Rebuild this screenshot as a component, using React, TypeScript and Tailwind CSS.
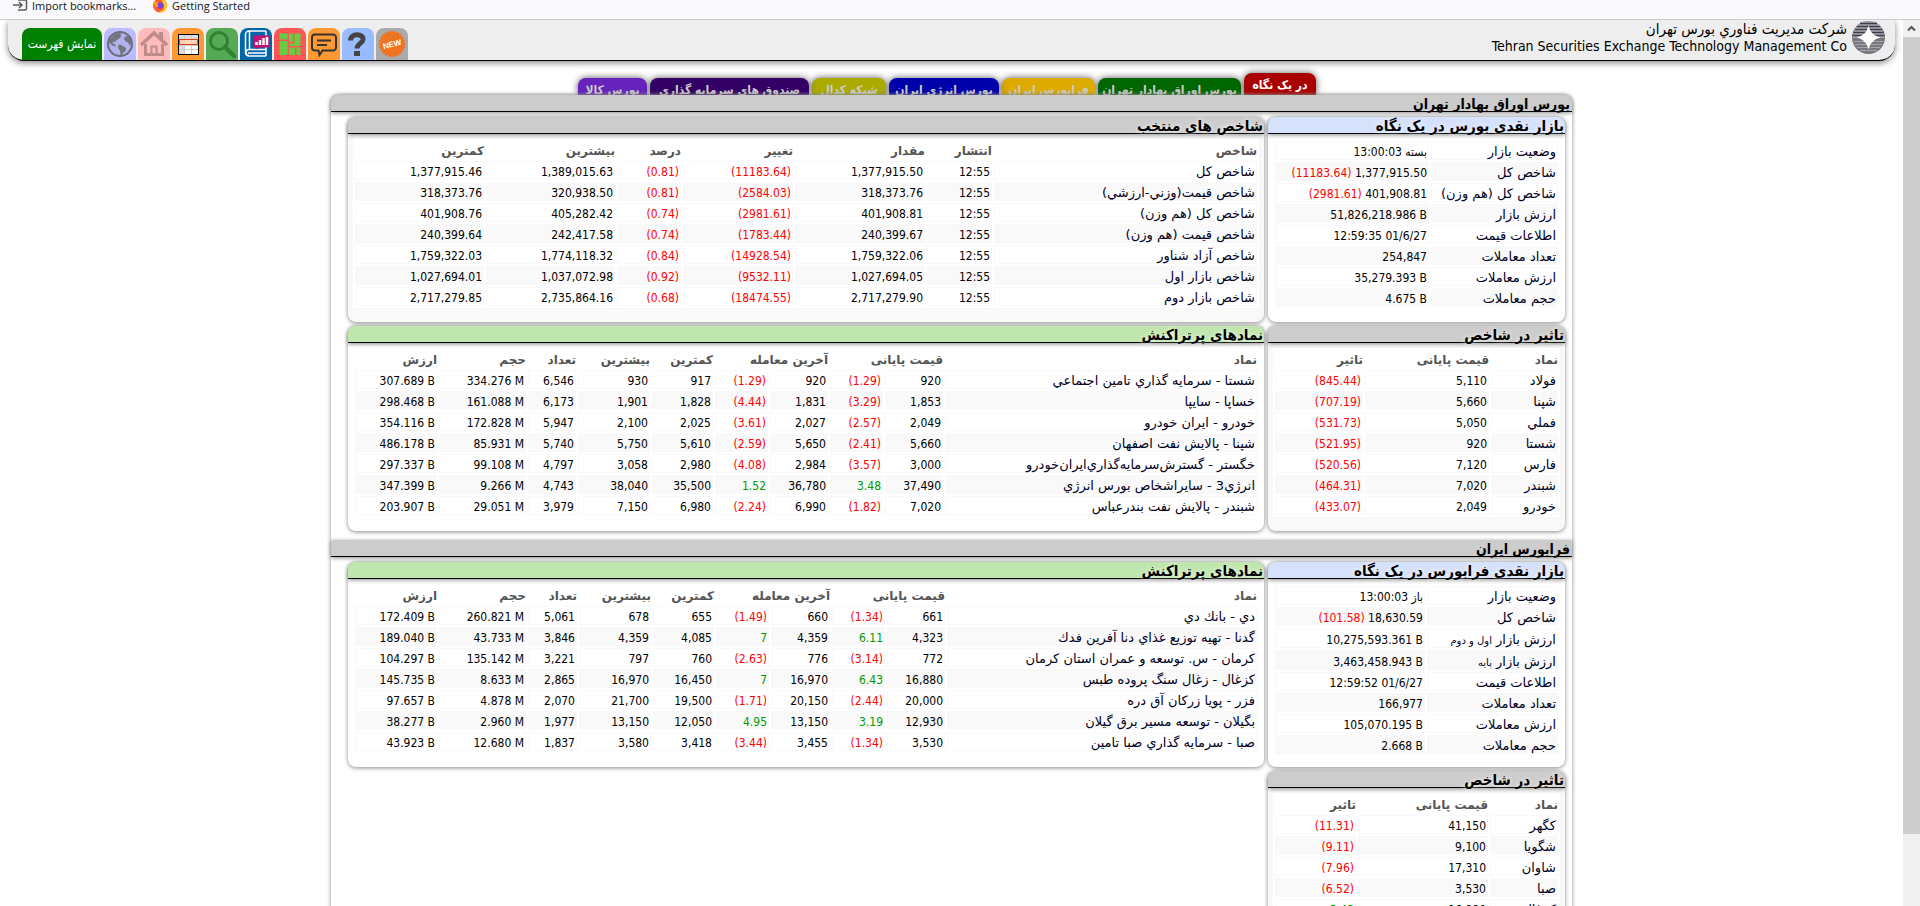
import { ReactNode } from "react";
import clsx from "clsx";

type Row = string[];

const tabs = [
  { label: "در یک نگاه", color: "bg-[#a00]", width: "w-[72px]", active: true },
  { label: "بورس اوراق بهادار تهران", color: "bg-[#060]", width: "w-[143px]" },
  { label: "فرابورس ایران", color: "bg-[#da0]", width: "w-[93px]" },
  { label: "بورس انرژی ایران", color: "bg-[#00a]", width: "w-[110px]" },
  { label: "شبکه کدال", color: "bg-[#aa0]", width: "w-[74px]" },
  { label: "صندوق های سرمایه گذاری", color: "bg-[#306]", width: "w-[159px]" },
  { label: "بورس کالا", color: "bg-[#62b]", width: "w-[69px]" },
];

const indices: Row[] = [
  ["شاخص کل", "12:55", "1,377,915.50", "(11183.64)", "(0.81)", "1,389,015.63", "1,377,915.46"],
  ["شاخص قيمت(وزني-ارزشي)", "12:55", "318,373.76", "(2584.03)", "(0.81)", "320,938.50", "318,373.76"],
  ["شاخص کل (هم وزن)", "12:55", "401,908.81", "(2981.61)", "(0.74)", "405,282.42", "401,908.76"],
  ["شاخص قيمت (هم وزن)", "12:55", "240,399.67", "(1783.44)", "(0.74)", "242,417.58", "240,399.64"],
  ["شاخص آزاد شناور", "12:55", "1,759,322.06", "(14928.54)", "(0.84)", "1,774,118.32", "1,759,322.03"],
  ["شاخص بازار اول", "12:55", "1,027,694.05", "(9532.11)", "(0.92)", "1,037,072.98", "1,027,694.01"],
  ["شاخص بازار دوم", "12:55", "2,717,279.90", "(18474.55)", "(0.68)", "2,735,864.16", "2,717,279.85"],
];

const bourseActive: Row[] = [
  ["شستا - سرمايه گذاري تامين اجتماعي", "920", "(1.29)", "920", "(1.29)", "917", "930", "6,546", "334.276 M", "307.689 B"],
  ["خساپا - سايپا", "1,853", "(3.29)", "1,831", "(4.44)", "1,828", "1,901", "6,173", "161.088 M", "298.468 B"],
  ["خودرو - ايران خودرو", "2,049", "(2.57)", "2,027", "(3.61)", "2,025", "2,100", "5,947", "172.828 M", "354.116 B"],
  ["شپنا - پالايش نفت اصفهان", "5,660", "(2.41)", "5,650", "(2.59)", "5,610", "5,750", "5,740", "85.931 M", "486.178 B"],
  ["خگستر - گسترش‌سرمايه‌گذاري‌ايران‌خودرو", "3,000", "(3.57)", "2,984", "(4.08)", "2,980", "3,058", "4,797", "99.108 M", "297.337 B"],
  ["انرژي3 - سايراشخاص بورس انرژي", "37,490", "3.48", "36,780", "1.52", "35,500", "38,040", "4,743", "9.266 M", "347.399 B"],
  ["شبندر - پالايش نفت بندرعباس", "7,020", "(1.82)", "6,990", "(2.24)", "6,980", "7,150", "3,979", "29.051 M", "203.907 B"],
];

const faraActive: Row[] = [
  ["دي - بانك دي", "661", "(1.34)", "660", "(1.49)", "655", "678", "5,061", "260.821 M", "172.409 B"],
  ["گدنا - تهيه توزيع غذاي دنا آفرين فدك", "4,323", "6.11", "4,359", "7", "4,085", "4,359", "3,846", "43.733 M", "189.040 B"],
  ["كرمان - س. توسعه و عمران استان كرمان", "772", "(3.14)", "776", "(2.63)", "760", "797", "3,221", "135.142 M", "104.297 B"],
  ["كزغال - زغال سنگ پروده طبس", "16,880", "6.43", "16,970", "7", "16,450", "16,970", "2,865", "8.633 M", "145.735 B"],
  ["فزر - پويا زركان آق دره", "20,000", "(2.44)", "20,150", "(1.71)", "19,500", "21,700", "2,070", "4.878 M", "97.657 B"],
  ["بگيلان - توسعه مسير برق گيلان", "12,930", "3.19", "13,150", "4.95", "12,050", "13,150", "1,977", "2.960 M", "38.277 B"],
  ["صبا - سرمايه گذاري صبا تامين", "3,530", "(1.34)", "3,455", "(3.44)", "3,418", "3,580", "1,837", "12.680 M", "43.923 B"],
];

const bourseEffect: Row[] = [
  ["فولاد", "5,110", "(845.44)"],
  ["شپنا", "5,660", "(707.19)"],
  ["فملي", "5,050", "(531.73)"],
  ["شستا", "920", "(521.95)"],
  ["فارس", "7,120", "(520.56)"],
  ["شبندر", "7,020", "(464.31)"],
  ["خودرو", "2,049", "(433.07)"],
];

const faraEffect: Row[] = [
  ["كگهر", "41,150", "(11.31)"],
  ["شگويا", "9,100", "(9.11)"],
  ["شاوان", "17,310", "(7.96)"],
  ["صبا", "3,530", "(6.52)"],
  ["كزغال", "16,880", "3.43"],
];

const activeHead = [
  { label: "نماد" },
  { label: "قیمت پایانی", span: 2 },
  { label: "آخرین معامله", span: 2 },
  { label: "کمترین" },
  { label: "بیشترین" },
  { label: "تعداد" },
  { label: "حجم" },
  { label: "ارزش" },
];

const effectHead = [{ label: "نماد" }, { label: "قیمت پایانی" }, { label: "تاثیر" }];

const indexHead = ["شاخص", "انتشار", "مقدار", "تغییر", "درصد", "بیشترین", "کمترین"].map((label) => ({ label }));

const cell = "whitespace-nowrap border border-[#f9f9f9] px-px pb-0 pt-[3px] text-right leading-[14px]";
const nameText = "font-['DejaVu_Sans',sans-serif] text-[13px] text-[#002]";

function DataTable({ head, cols, rows, change }: {
  head: { label: string; span?: number }[];
  cols: string[];
  rows: Row[];
  change: number[];
}) {
  return (
    <table className="w-full table-fixed border-separate border-spacing-[2px] bg-white text-xs">
      <colgroup>
        {cols.map((c, i) => <col key={i} className={c} />)}
      </colgroup>
      <thead>
        <tr>
          {head.map((h) => (
            <th key={h.label} colSpan={h.span} className="h-[18px] whitespace-nowrap px-0 pb-0 pt-0.5 text-right font-['DejaVu_Sans',sans-serif] font-bold leading-4 text-[#555]">
              {h.label}
            </th>
          ))}
        </tr>
      </thead>
      <tbody>
        {rows.map((row) => (
          <tr key={row[0]} className="even:bg-[#f9f9f9]">
            {row.map((value, i) => (
              <td
                key={i}
                dir={i === 0 ? "rtl" : "ltr"}
                className={clsx(
                  cell,
                  "h-[19px]",
                  i === 0 && nameText,
                  change.includes(i) && (value.startsWith("(") ? "text-[#f00]" : "text-[#090]")
                )}
              >
                {value}
              </td>
            ))}
          </tr>
        ))}
      </tbody>
    </table>
  );
}

function SummaryTable({ labelCol, rows }: { labelCol: string; rows: [ReactNode, ReactNode][] }) {
  return (
    <table className="w-full table-fixed border-separate border-spacing-[2px] bg-white text-xs">
      <colgroup>
        <col className={labelCol} />
        <col />
      </colgroup>
      <tbody>
        {rows.map(([label, value], i) => (
          <tr key={i} className="even:bg-[#f9f9f9]">
            <th className={clsx(cell, nameText, "font-normal", typeof label === "string" ? "h-[19px]" : "h-5")}>{label}</th>
            <td className={cell}>{value}</td>
          </tr>
        ))}
      </tbody>
    </table>
  );
}

function Panel({ title, tone, muted, children }: { title: string; tone: string; muted?: boolean; children: ReactNode }) {
  return (
    <section className={clsx("min-h-[205px] rounded-lg shadow-[0_1px_4px_#888]", muted ? "bg-[#f9f9f9]" : "bg-white")}>
      <h3 className={clsx("h-[17px] rounded-t-lg border-b border-black px-px text-[15px] font-bold leading-[18px] shadow-[0_1px_4px_#888] [text-shadow:0_0_5px_#fff]", tone)}>
        {title}
      </h3>
      <div className="px-[5px] pb-2 pt-[5px]">{children}</div>
    </section>
  );
}

function Market({ title, first, side, main }: { title: string; first?: boolean; side: ReactNode; main: ReactNode }) {
  return (
    <section className="mb-[9px]">
      <h2 className={clsx("h-[17px] border-b border-black bg-[#ccc] px-0.5 text-sm font-bold leading-[18px] shadow-[0_1px_4px_#888]", first && "rounded-t-lg")}>
        {title}
      </h2>
      <div className="flex gap-1 pl-[17px] pr-[7px] pt-[5px]">
        <div className="flex w-[297px] shrink-0 flex-col gap-1">{side}</div>
        <div className="flex min-w-0 grow flex-col gap-1">{main}</div>
      </div>
    </section>
  );
}

const Red = ({ children }: { children: string }) => <bdi className="text-[#f00]">{children}</bdi>;
const Ltr = ({ children }: { children: string }) => <bdi dir="ltr">{children}</bdi>;

const bourseSummary: [ReactNode, ReactNode][] = [
  ["وضعیت بازار", "بسته 13:00:03"],
  ["شاخص کل", <><Ltr>1,377,915.50</Ltr> <Red>(11183.64)</Red></>],
  ["شاخص كل (هم وزن)", <><Ltr>401,908.81</Ltr> <Red>(2981.61)</Red></>],
  ["ارزش بازار", <Ltr>51,826,218.986 B</Ltr>],
  ["اطلاعات قیمت", <Ltr>12:59:35 01/6/27</Ltr>],
  ["تعداد معاملات", "254,847"],
  ["ارزش معاملات", <Ltr>35,279.393 B</Ltr>],
  ["حجم معاملات", <Ltr>4.675 B</Ltr>],
];

const faraSummary: [ReactNode, ReactNode][] = [
  ["وضعیت بازار", "باز 13:00:03"],
  ["شاخص کل", <><Ltr>18,630.59</Ltr> <Red>(101.58)</Red></>],
  [<>ارزش بازار <small className="text-[10px] leading-3">اول و دوم</small></>, <Ltr>10,275,593.361 B</Ltr>],
  [<>ارزش بازار <small className="text-[10px] leading-3">پایه</small></>, <Ltr>3,463,458.943 B</Ltr>],
  ["اطلاعات قیمت", <Ltr>12:59:52 01/6/27</Ltr>],
  ["تعداد معاملات", "166,977"],
  ["ارزش معاملات", <Ltr>105,070.195 B</Ltr>],
  ["حجم معاملات", <Ltr>2.668 B</Ltr>],
];

const GlobeIcon = () => (
  <svg viewBox="0 0 32 32" className="size-8">
    <circle cx="16" cy="16" r="12" fill="#b2b2ee" stroke="#6c6c78" strokeWidth="2" />
    <g fill="#75757f">
      <path d="M6 11.500l4-5 5-1.500 3 1-2 1.500 1.500 1-3 2.500-2.500 1.500-1 2-2-1-.500 1.500 2.500 1.500 1 2-3-.500-3-2.500-1.500-2z" />
      <path d="M14.500 16.500l3 .500 4.500 3-.500 3-2.500 2-1 2.500-1.500-.500-.500-4-2-3z" />
      <path d="M21 8.500l3.500-.500 2.500 4 .500 4-2 1.500-1.500-3-2.500-1-1.500-2.500z" />
    </g>
  </svg>
);

const HomeIcon = () => (
  <svg viewBox="0 0 32 32" className="size-8" fill="none" stroke="#bf8c8c">
    <path d="M3 17L16 5l13 12" strokeWidth="3.5" />
    <path d="M23 4v7" strokeWidth="4" />
    <path d="M7.500 16v10.500h17V16" strokeWidth="3" />
    <path d="M13.500 27v-8.500h5V27" strokeWidth="2" />
  </svg>
);

const SheetIcon = () => (
  <svg viewBox="0 0 32 32" className="size-8">
    <rect x="6.500" y="6.500" width="20" height="20" fill="#fff" stroke="#000" />
    <path d="M7 7h5v19H7zM12 7h14v4H12z" fill="#ddd" />
    <path d="M12.500 7v19M19.500 7v19M7 17.500h19M7 21.500h19" stroke="#ccc" strokeWidth="1" />
    <rect x="7.500" y="11.500" width="18" height="5" fill="#fca" fillOpacity=".8" stroke="#e0401a" />
  </svg>
);

const SearchIcon = () => (
  <svg viewBox="0 0 32 32" className="size-8" fill="none" stroke="#338033">
    <circle cx="13" cy="13" r="8.500" strokeWidth="3" />
    <path d="M19 19l9 9" strokeWidth="4.500" strokeLinecap="round" />
  </svg>
);

const BookIcon = () => (
  <svg viewBox="0 0 32 32" className="size-8">
    <path d="M26 3H9a3.500 3.500 0 0 0-3.500 3.500v18A3.500 3.500 0 0 0 9 28h17M9.500 3v19M26 3v18.500H9a3 3 0 0 0 0 6M8 25h18M26 22v6" fill="none" stroke="#fff" strokeWidth="1.500" />
    <path d="M14 7.500h15v12H19l-2 2-1-2h-2z" fill="#c8106e" />
    <path d="M16.500 17v-3M20 17v-5M23.500 17v-7M27 17V9" stroke="#fff" strokeWidth="2.500" />
  </svg>
);

const MapIcon = () => (
  <svg viewBox="0 0 32 32" className="size-8" fill="#6c4">
    <path d="M5.500 5.500h8v6h-8zM5.500 13h8v14h-8zM15 5.500h4v8.500h-4zM20.500 5.500h6v12.500H15v-2.500h5.500zM15 19.500h6v7.500h-6zM22.500 19.500h4v7.500h-4z" />
  </svg>
);

const ChatIcon = () => (
  <svg viewBox="0 0 32 32" className="size-8" fill="none" stroke="#333" strokeWidth="2">
    <path d="M7 6.500h18a3 3 0 0 1 3 3v10a3 3 0 0 1-3 3H14.500L11.500 27l-1-4.500H7a3 3 0 0 1-3-3v-10a3 3 0 0 1 3-3z" />
    <path d="M9 12.500h14M9 17h10" />
  </svg>
);

const HelpIcon = () => (
  <svg viewBox="0 0 32 32" className="size-8" fill="none" stroke="#444">
    <path d="M8.500 12.500c0-7.500 13-7.500 12.500-1-.5 4-6 4-6 9" strokeWidth="5" />
    <path d="M12 23h6v5h-6z" fill="#444" stroke="none" />
  </svg>
);

const sealPoints = Array.from({ length: 48 }, (_, i) => {
  const r = i % 2 ? 12 : 13.8;
  const a = (i * Math.PI) / 24;
  return `${16 + r * Math.cos(a)},${16 + r * Math.sin(a)}`;
}).join(" ");

const NewIcon = () => (
  <svg viewBox="0 0 32 32" className="size-8">
    <polygon points={sealPoints} fill="#ee7420" />
    <text x="16" y="19" textAnchor="middle" fontSize="8" fontWeight="bold" fill="#fff" fontFamily="Liberation Sans" transform="rotate(-14 16 16)">NEW</text>
  </svg>
);

const tools = [
  { label: "English", color: "bg-[#bbf]", icon: <GlobeIcon /> },
  { label: "صفحه اصلی", color: "bg-[#fbb]", icon: <HomeIcon /> },
  { label: "دیده بان", color: "bg-[#f93]", icon: <SheetIcon /> },
  { label: "جستجو", color: "bg-[#5a5]", icon: <SearchIcon /> },
  { label: "آمار", color: "bg-[#06a]", icon: <BookIcon /> },
  { label: "نقشه بازار", color: "bg-[#f55]", icon: <MapIcon /> },
  { label: "پیام ها", color: "bg-[#f93]", icon: <ChatIcon /> },
  { label: "راهنما", color: "bg-[#9bf]", icon: <HelpIcon /> },
  { label: "تازه ها", color: "bg-[#aaa]", icon: <NewIcon /> },
];

const Logo = () => (
  <svg viewBox="0 0 33 33" className="size-[33px] shrink-0">
    <circle cx="16.500" cy="16.500" r="16.500" fill="#77777f" />
    <path d="M8 2.500h17M5 5.500h23M3 8.500h27M1.500 11.500h30M.5 14.500h32" stroke="#3c3c4c" strokeWidth="2" />
    <path d="M9 1h15M5 4h23M3 7h27M2 10h29M1 13h31M.5 16h32" stroke="#c5c5ca" strokeWidth="1" />
    <path d="M1.500 20.500h30M3 23.500h27M5 26.500h23M8 29.500h17" stroke="#a5a5ab" strokeWidth="1" />
    <path d="M16.500 4.500C18 11 22 15 28.500 16.500 22 18 18 22 16.500 28.500 15 22 11 18 4.500 16.500 11 15 15 11 16.500 4.500z" fill="#fff" />
  </svg>
);

function BookmarksBar() {
  return (
    <div className="flex h-5 shrink-0 items-start gap-4 border-b border-[#ccccd0] bg-[#f9f9fb] pl-3 font-['Open_Sans',sans-serif] text-[11px] leading-3 text-[#15141a]">
      <a href="#import" className="flex gap-1">
        <svg viewBox="0 0 16 12" className="h-3 w-4" fill="none" stroke="#5b5b66" strokeWidth="1.500">
          <path d="M6 0h7a1.500 1.500 0 0 1 1.500 1.500v7A1.500 1.500 0 0 1 13 10H6M1 5h8.500M7 2l3 3-3 3" />
        </svg>
        Import bookmarks...
      </a>
      <a href="#start" className="flex gap-1">
        <svg viewBox="0 0 16 14" className="h-3.5 w-4">
          <circle cx="8" cy="5.500" r="7" fill="#ff5a2a" />
          <path d="M9-2c5 2 7.500 6 5.500 10.500C13 12 9 13.500 5 12c5 0 8-3 7-7-.5-2-2-3-3-7z" fill="#ffc42e" />
          <circle cx="8" cy="5.500" r="3.200" fill="#7a3fe0" />
          <path d="M1.500 2C3 1 5 1.500 7 3c-2 0-2 1.500-.5 2.500C5 9 2 7 1.500 2z" fill="#ff9a1f" />
        </svg>
        Getting Started
      </a>
    </div>
  );
}

function Header() {
  return (
    <header className="mx-2 flex h-[41px] items-end justify-between rounded-b-2xl border-b border-black bg-[#eee] pl-3.5 pr-2.5 shadow-[0_2px_6px_#888]">
      <nav className="flex gap-0.5">
        <button className="h-8 w-20 whitespace-nowrap rounded-t-lg bg-[#008000] text-xs text-white">نمایش فهرست</button>
        {tools.map((tool) => (
          <a key={tool.label} href="#tool" aria-label={tool.label} className={clsx("size-8 overflow-hidden rounded-t-lg", tool.color)}>
            {tool.icon}
          </a>
        ))}
      </nav>
      <div className="flex gap-[5px] self-start pt-px">
        <div className="text-right leading-[17px]">
          <p dir="rtl" className="text-[15px]">شركت مديريت فناوري بورس تهران</p>
          <p className="text-sm leading-[17px]">Tehran Securities Exchange Technology Management Co</p>
        </div>
        <Logo />
      </div>
    </header>
  );
}

function Scrollbar() {
  return (
    <div className="flex w-[17px] shrink-0 flex-col bg-[#f0f0f0]">
      <svg viewBox="0 0 17 17" className="size-[17px]" fill="none" stroke="#555" strokeWidth="2">
        <path d="M5 10.500L8.500 7l3.500 3.500" />
      </svg>
      <div className="h-[90%] bg-[#cdcdcd]" />
    </div>
  );
}

export default function App() {
  return (
    <div className="flex h-screen flex-col overflow-hidden bg-white font-['DejaVu_Sans_Condensed','DejaVu_Sans',sans-serif] text-black">
      <BookmarksBar />
      <div className="flex min-h-0 grow">
        <div className="min-w-0 grow overflow-hidden">
          <Header />
          <main dir="rtl" className="mx-auto w-full max-w-[1241px]">
            <nav className="flex h-[34px] items-end gap-[3px] pr-64">
              {tabs.map((tab) => (
                <a
                  key={tab.label}
                  href="#tab"
                  className={clsx(
                    "shrink-0 overflow-hidden whitespace-nowrap rounded-t-lg text-center text-xs font-bold leading-6 shadow-[0_0_7px_#555]",
                    tab.color,
                    tab.width,
                    tab.active ? "h-[22px] text-white" : "h-[17px] text-[#ccc]"
                  )}
                >
                  {tab.label}
                </a>
              ))}
            </nav>
            <div className="relative rounded-t-lg bg-white shadow-[0_0_4px_#888]">
              <Market
                title="بورس اوراق بهادار تهران"
                first
                side={
                  <>
                    <Panel title="بازار نقدی بورس در یک نگاه" tone="bg-[#d6e1fb]">
                      <SummaryTable labelCol="w-[127px]" rows={bourseSummary} />
                    </Panel>
                    <Panel title="تاثیر در شاخص" tone="bg-[#ccc]" muted>
                      <DataTable head={effectHead} cols={["w-[67px]", "w-[124px]", ""]} rows={bourseEffect} change={[2]} />
                    </Panel>
                  </>
                }
                main={
                  <>
                    <Panel title="شاخص های منتخب" tone="bg-[#ccc]" muted>
                      <DataTable
                        head={indexHead}
                        cols={["", "w-[65px]", "w-[130px]", "w-[110px]", "w-[64px]", "w-[129px]", "w-[129px]"]}
                        rows={indices}
                        change={[3, 4]}
                      />
                    </Panel>
                    <Panel title="نمادهای پرتراکنش" tone="bg-[#bfe6ac]">
                      <DataTable
                        head={activeHead}
                        cols={["", "w-[58px]", "w-[53px]", "w-[58px]", "w-[53px]", "w-[61px]", "w-[72px]", "w-[48px]", "w-[87px]", "w-[82px]"]}
                        rows={bourseActive}
                        change={[2, 4]}
                      />
                    </Panel>
                  </>
                }
              />
              <Market
                title="فرابورس ایران"
                side={
                  <>
                    <Panel title="بازار نقدی فرابورس در یک نگاه" tone="bg-[#d6e1fb]">
                      <SummaryTable labelCol="w-[131px]" rows={faraSummary} />
                    </Panel>
                    <Panel title="تاثیر در شاخص" tone="bg-[#ccc]" muted>
                      <DataTable head={effectHead} cols={["w-[68px]", "w-[130px]", ""]} rows={faraEffect} change={[2]} />
                    </Panel>
                  </>
                }
                main={
                  <Panel title="نمادهای پرتراکنش" tone="bg-[#bfe6ac]">
                    <DataTable
                      head={activeHead}
                      cols={["", "w-[58px]", "w-[53px]", "w-[59px]", "w-[53px]", "w-[61px]", "w-[72px]", "w-[49px]", "w-[87px]", "w-[82px]"]}
                      rows={faraActive}
                      change={[2, 4]}
                    />
                  </Panel>
                }
              />
            </div>
          </main>
        </div>
        <Scrollbar />
      </div>
    </div>
  );
}
